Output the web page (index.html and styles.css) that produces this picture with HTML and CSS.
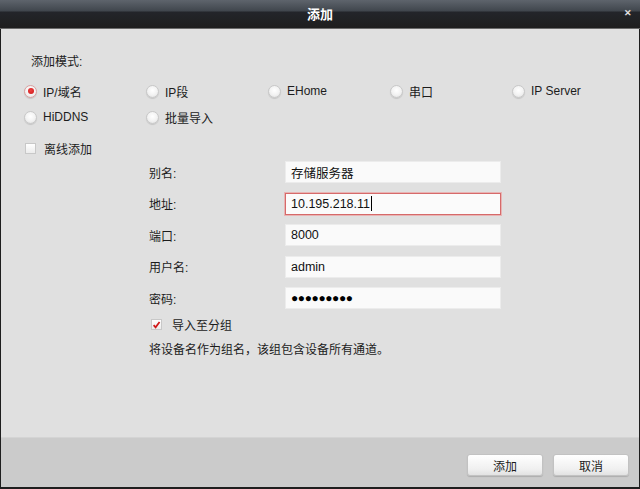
FILE: index.html
```html
<!DOCTYPE html>
<html lang="zh">
<head>
<meta charset="utf-8">
<title>添加</title>
<link rel="stylesheet" href="styles.css">
</head>
<body>
<div class="dialog">
  <div class="titlebar">
    <span class="title">添加</span>
    <span class="close">✕</span>
  </div>
  <div class="content">
    <div class="mode-label">添加模式:</div>
    <div class="radio-grid">
      <label class="opt"><span class="radio checked"></span>IP/域名</label>
      <label class="opt"><span class="radio"></span>IP段</label>
      <label class="opt"><span class="radio"></span>EHome</label>
      <label class="opt"><span class="radio"></span>串口</label>
      <label class="opt"><span class="radio"></span>IP Server</label>
      <label class="opt"><span class="radio"></span>HiDDNS</label>
      <label class="opt"><span class="radio"></span>批量导入</label>
    </div>
    <label class="offline"><span class="check"></span>离线添加</label>
    <div class="form">
      <div class="row"><span class="lbl">别名:</span><div class="input">存储服务器</div></div>
      <div class="row"><span class="lbl">地址:</span><div class="input focus">10.195.218.11<span class="caret"></span></div></div>
      <div class="row"><span class="lbl">端口:</span><div class="input">8000</div></div>
      <div class="row"><span class="lbl">用户名:</span><div class="input">admin</div></div>
      <div class="row"><span class="lbl">密码:</span><div class="input pwd">●●●●●●●●●</div></div>
      <label class="group"><span class="check on"><svg viewBox="0 0 10 10" width="10" height="10"><path d="M1.8 5.2 L4 7.6 L8.4 1.6" fill="none" stroke="#d01818" stroke-width="1.9"/></svg></span>导入至分组</label>
      <div class="desc">将设备名作为组名，该组包含设备所有通道。</div>
    </div>
  </div>
  <div class="footer">
    <button class="btn">添加</button>
    <button class="btn">取消</button>
  </div>
</div>
</body>
</html>
```
FILE: styles.css
```css
html, body {
  margin: 0;
  padding: 0;
  background: #1e1e1e;
}
body {
  font-family: "Liberation Sans", "Noto Sans CJK SC", sans-serif;
  font-size: 12px;
  color: #1c1c1c;
}
.dialog {
  width: 640px;
  height: 489px;
  display: flex;
  flex-direction: column;
  box-sizing: border-box;
  background: #1e1e1e;
}
.titlebar {
  height: 28px;
  flex: none;
  background: linear-gradient(to bottom, #5e646c 0px, #40464d 11px, #23252a 12px, #1e1e1e 28px);
  display: flex;
  align-items: center;
  justify-content: center;
  position: relative;
  border-bottom: 1px solid #6a6a6a;
}
.title {
  color: #ffffff;
  font-weight: bold;
  font-size: 13px;
  margin-top: -1px;
}
.close {
  position: absolute;
  right: 8px;
  top: 8px;
  color: #e0e0e0;
  font-size: 9px;
  font-weight: bold;
}
.content {
  flex: 1;
  background: #e0e0e0;
  margin: 0 1px;
  padding: 0;
  position: relative;
}
.mode-label {
  margin: 25px 0 0 30px;
  line-height: 16px;
}
.radio-grid {
  display: grid;
  grid-template-columns: repeat(5, 122px);
  grid-auto-rows: 26px;
  margin: 8px 0 0 23px;
}
.opt {
  display: flex;
  align-items: center;
  gap: 6px;
}
.radio {
  width: 13px;
  height: 13px;
  border-radius: 50%;
  box-sizing: border-box;
  border: 1px solid #c8c8c8;
  background: radial-gradient(circle at 50% 40%, #ffffff 0%, #f2f2f2 55%, #dcdcdc 100%);
  box-shadow: 0 1px 1px rgba(0,0,0,0.12);
  position: relative;
}
.radio.checked {
  border-color: #d9a0a0;
}
.radio.checked::after {
  content: "";
  position: absolute;
  left: 2.5px;
  top: 2.5px;
  width: 6px;
  height: 6px;
  border-radius: 50%;
  background: radial-gradient(circle at 45% 40%, #f04040, #c81818);
}
.offline {
  display: flex;
  align-items: center;
  gap: 8px;
  margin: 10px 0 0 24px;
  height: 16px;
}
.check {
  width: 11px;
  height: 11px;
  box-sizing: border-box;
  border: 1px solid #c8c8c8;
  background: linear-gradient(#ffffff, #ececec);
  display: inline-flex;
  align-items: center;
  justify-content: center;
}
.form {
  margin: 5px 0 0 148px;
  width: 352px;
}
.row {
  display: flex;
  align-items: center;
  height: 22px;
  margin-bottom: 9.5px;
}
.lbl {
  width: 136px;
  flex: none;
}
.input {
  flex: 1;
  height: 22px;
  box-sizing: border-box;
  background: #fafafa;
  border: 1px solid #ececec;
  display: flex;
  align-items: center;
  padding-left: 5px;
  font-size: 12.5px;
  color: #111;
}
.input.focus {
  border: 1px solid #d66a6a;
  box-shadow: 0 0 0 1px #e8b4b4;
  background: #fbfbfb;
}
.caret {
  display: inline-block;
  width: 1px;
  height: 15px;
  background: #000;
  margin-left: 1px;
}
.pwd {
  font-size: 12px;
  letter-spacing: -0.4px;
  color: #000;
}
.group {
  display: flex;
  align-items: center;
  gap: 10px;
  margin: -2px 0 0 2px;
  height: 16px;
}
.desc {
  margin-top: 9px;
  line-height: 16px;
}
.footer {
  height: 50px;
  flex: none;
  background: #cbcbcb;
  border-top: 1px solid #d4d4d4;
  margin: 0 1px 2px 1px;
  display: flex;
  justify-content: flex-end;
  align-items: flex-start;
  gap: 10px;
  padding: 16px 10px 0 0;
  box-sizing: border-box;
}
.btn {
  width: 76px;
  height: 22px;
  font-family: inherit;
  font-size: 12px;
  color: #1c1c1c;
  border: 1px solid #c2c2c2;
  border-radius: 3px;
  background: linear-gradient(#ffffff, #f0f0f0 70%, #e2e2e2);
  box-shadow: 0 1px 1px rgba(0,0,0,0.15);
  padding: 0;
}
```
